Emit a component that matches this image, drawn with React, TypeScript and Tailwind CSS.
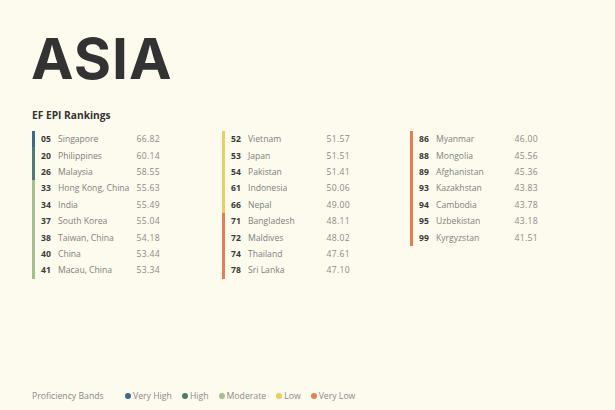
import React from "react";

type Row = { r: string; n: string; s: string; b: "vh" | "h" | "m" | "l" | "vl" };

const barColor: Record<string, string> = {
  vh: "bg-[#3d6a8a]",
  h: "bg-[#4d7c74]",
  m: "bg-[#a5bf8f]",
  l: "bg-[#e9d064]",
  vl: "bg-[#e67d57]",
};

const cols: Row[][] = [
  [
    { r: "05", n: "Singapore", s: "66.82", b: "vh" },
    { r: "20", n: "Philippines", s: "60.14", b: "h" },
    { r: "26", n: "Malaysia", s: "58.55", b: "h" },
    { r: "33", n: "Hong Kong, China", s: "55.63", b: "m" },
    { r: "34", n: "India", s: "55.49", b: "m" },
    { r: "37", n: "South Korea", s: "55.04", b: "m" },
    { r: "38", n: "Taiwan, China", s: "54.18", b: "m" },
    { r: "40", n: "China", s: "53.44", b: "m" },
    { r: "41", n: "Macau, China", s: "53.34", b: "m" },
  ],
  [
    { r: "52", n: "Vietnam", s: "51.57", b: "l" },
    { r: "53", n: "Japan", s: "51.51", b: "l" },
    { r: "54", n: "Pakistan", s: "51.41", b: "l" },
    { r: "61", n: "Indonesia", s: "50.06", b: "l" },
    { r: "66", n: "Nepal", s: "49.00", b: "l" },
    { r: "71", n: "Bangladesh", s: "48.11", b: "vl" },
    { r: "72", n: "Maldives", s: "48.02", b: "vl" },
    { r: "74", n: "Thailand", s: "47.61", b: "vl" },
    { r: "78", n: "Sri Lanka", s: "47.10", b: "vl" },
  ],
  [
    { r: "86", n: "Myanmar", s: "46.00", b: "vl" },
    { r: "88", n: "Mongolia", s: "45.56", b: "vl" },
    { r: "89", n: "Afghanistan", s: "45.36", b: "vl" },
    { r: "93", n: "Kazakhstan", s: "43.83", b: "vl" },
    { r: "94", n: "Cambodia", s: "43.78", b: "vl" },
    { r: "95", n: "Uzbekistan", s: "43.18", b: "vl" },
    { r: "99", n: "Kyrgyzstan", s: "41.51", b: "vl" },
  ],
];

const legend = [
  { c: "bg-[#3d6a8a]", t: "Very High" },
  { c: "bg-[#4d7c68]", t: "High" },
  { c: "bg-[#a5bf8f]", t: "Moderate" },
  { c: "bg-[#e9cd5e]", t: "Low" },
  { c: "bg-[#e67d57]", t: "Very Low" },
];

export default function App() {
  return (
    <div
      className="w-[615px] h-[410px] bg-[#fdfbee] flex flex-col pl-[31px] overflow-hidden"
      style={{ fontFamily: "'Open Sans', 'Liberation Sans', sans-serif" }}
    >
      <h1
        className="mt-[26px] text-[57px] leading-[66px] font-bold text-[#333333] tracking-[1px]"
        style={{ fontFamily: "Inter, 'Liberation Sans', sans-serif" }}
      >
        ASIA
      </h1>
      <div className="mt-[17px] ml-[1px] text-[10.2px] leading-[12px] font-bold text-[#333333]">EF EPI Rankings</div>
      <div className="mt-[9px] ml-[1px] grid grid-cols-[190px_188px_189px]">
        {cols.map((col, ci) => (
          <div key={ci} className="flex flex-col py-[1px]">
            {col.map((row, ri) => (
              <div key={ri} className="flex items-center h-[16.4px]">
                <div className={`w-[3px] self-stretch ${barColor[row.b]}`} />
                <div className="w-[119px] ml-[6px] flex items-center text-[8.6px] leading-[16px]">
                  <span className="font-bold text-[#3a3a3a] w-[17px]">{row.r}</span>
                  <span className="text-[#808080] flex-1">{row.n}</span>
                  <span className="text-[#8a8a8a] tracking-[0.3px]">{row.s}</span>
                </div>
              </div>
            ))}
          </div>
        ))}
      </div>
      <div className="mt-auto mb-[7px] ml-[1px] flex items-center text-[8.7px] text-[#8a8a8a]">
        <span className="w-[93px]">Proficiency Bands</span>
        <div className="flex items-center gap-[10px]">
          {legend.map((l) => (
            <div key={l.t} className="flex items-center gap-[2px]">
              <span className={`w-[6px] h-[6px] rounded-full ${l.c}`} />
              <span>{l.t}</span>
            </div>
          ))}
        </div>
      </div>
    </div>
  );
}
